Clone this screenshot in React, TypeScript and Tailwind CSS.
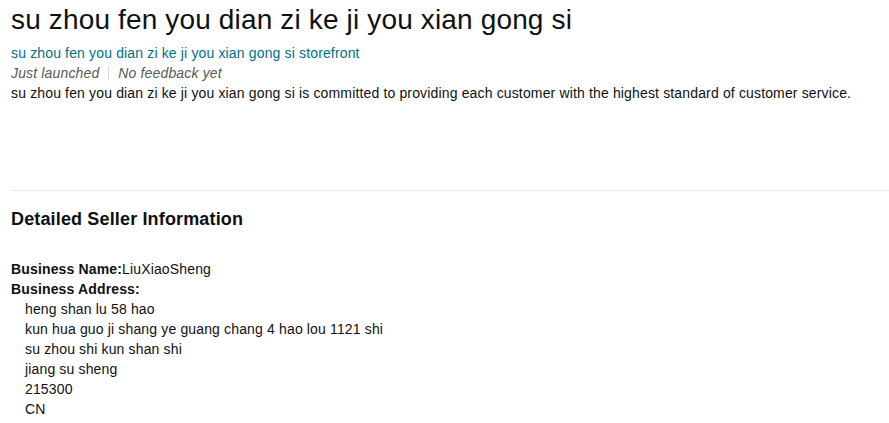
export default function App() {
  const address = [
    "heng shan lu 58 hao",
    "kun hua guo ji shang ye guang chang 4 hao lou 1121 shi",
    "su zhou shi kun shan shi",
    "jiang su sheng",
    "215300",
    "CN",
  ];
  return (
    <div className="bg-white text-[#0f1111] pl-[11px] pt-[2px] text-[14px] leading-[20px] tracking-[0.15px] font-['Liberation_Sans',Arial,sans-serif]">
      {/* Seller header */}
      <h1 className="text-[28px] leading-[36px] font-normal">su zhou fen you dian zi ke ji you xian gong si</h1>
      <div className="mt-[5px]">
        <a className="text-[#007185]">su zhou fen you dian zi ke ji you xian gong si storefront</a>
      </div>
      <div className="flex items-center italic text-[#565959]">
        <span>Just launched</span>
        <span className="mx-[9px] h-[15px] w-px bg-[#d5d9d9]"></span>
        <span>No feedback yet</span>
      </div>
      <p>su zhou fen you dian zi ke ji you xian gong si is committed to providing each customer with the highest standard of customer service.</p>

      <hr className="mt-[87px] border-t border-[#e7e7e7]" />

      {/* Detailed info */}
      <h3 className="mt-[16px] text-[18px] leading-[24px] font-bold">Detailed Seller Information</h3>
      <div className="mt-[28px]">
        <div><span className="font-bold">Business Name:</span>LiuXiaoSheng</div>
        <div className="font-bold">Business Address:</div>
        <ul className="pl-[14px]">
          {address.map((l) => (
            <li key={l}>{l}</li>
          ))}
        </ul>
      </div>
    </div>
  );
}
